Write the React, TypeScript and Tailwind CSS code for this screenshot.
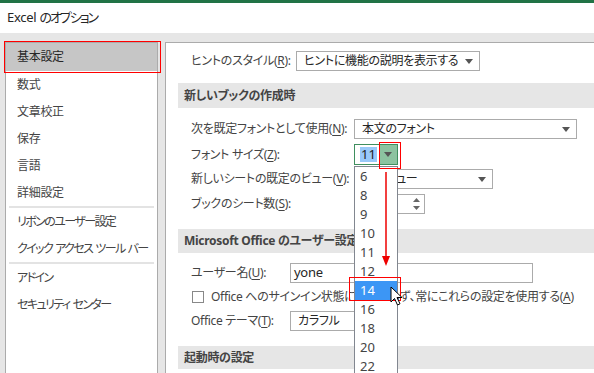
const Tri = () => (
  <svg width="8" height="5" viewBox="0 0 8 5" className="block shrink-0">
    <path d="M0 0h8L4 5z" fill="#555" />
  </svg>
);

const Select = ({ w, text }: { w: string; text: string }) => (
  <div className={`${w} shrink-0 h-[20px] border border-[#ababab] bg-white flex items-center justify-between pl-[7px] pr-[6px] text-[#262626] whitespace-nowrap`}>
    <span>{text}</span>
    <Tri />
  </div>
);

const U = ({ c }: { c: string }) => <span className="underline underline-offset-2">{c}</span>;

// カタカナ中心の項目：字間を詰めて、語の間だけ空ける
const KanaItem = ({ t }: { t: string }) => (
  <div className="h-[27px] flex items-center gap-[3px] pl-[11px] tracking-[-1.6px]">
    {t.split(" ").map((w) => (
      <span key={w}>{w}</span>
    ))}
  </div>
);

const sideTop = ["基本設定", "数式", "文章校正", "保存", "言語", "詳細設定"];
const sideMid = ["リボンのユーザー設定", "クイック アクセス ツール バー"];
const sideBottom = ["アドイン", "セキュリティ センター"];
const sizes = ["6", "8", "9", "10", "11", "12", "14", "16", "18", "20", "22"];

export default function App() {
  return (
    <div className="relative w-[594px] h-[373px] overflow-hidden bg-[#e6e6e6] text-[#444] text-[12px] tracking-[-0.3px] whitespace-nowrap font-['Noto_Sans','Noto_Sans_CJK_JP',sans-serif] [font-feature-settings:'palt']">
      <div className="h-[3px] bg-[#217346]" />
      <div className="h-[30px] bg-white flex items-center pl-[7px] text-[13px] text-[#262626]">
        Excel&nbsp;<span className="tracking-[-2px]">のオプション</span>
      </div>

      <div className="flex pt-[9px] h-[340px]">
        {/* 左：メニュー */}
        <aside className="ml-[5px] w-[153px] shrink-0 bg-white border border-b-0 border-[#ababab]">
          {sideTop.map((s, i) => (
            <div key={s} className={`h-[27px] flex items-center pl-[11px] ${i === 0 ? "bg-[#c6c6c6] h-[28px] text-[#262626]" : ""}`}>{s}</div>
          ))}
          <div className="mx-[3px] h-[2px] bg-[#e3e3e3]" />
          {sideMid.map((s) => (
            <KanaItem key={s} t={s} />
          ))}
          <div className="mx-[3px] h-[2px] bg-[#e3e3e3]" />
          {sideBottom.map((s) => (
            <KanaItem key={s} t={s} />
          ))}
        </aside>

        {/* 右：設定 */}
        <main className="ml-[7px] flex-1 min-w-0 bg-white border-l border-t border-[#ababab] pl-[12px]">
          <div className="mt-[8px] h-[20px] flex items-center pl-[13px]">
            <span className="w-[105px] shrink-0">ヒントのスタイル(<U c="R" />):</span>
            <Select w="w-[184px]" text="ヒントに機能の説明を表示する" />
          </div>

          <div className="mt-[12px] h-[25px] bg-[#e6e6e6] flex items-center pl-[6px] font-bold">新しいブックの作成時</div>

          <div className="mt-[11px] h-[20px] flex items-center pl-[13px]">
            <span className="w-[163px] shrink-0">次を既定フォントとして使用(<U c="N" />):</span>
            <Select w="w-[223px]" text="本文のフォント" />
          </div>

          <div className="mt-[5px] h-[21px] flex items-center pl-[13px]">
            <span className="w-[163px] shrink-0">フォント サイズ(<U c="Z" />):</span>
            <div className="relative z-10 w-[44px] shrink-0 h-[21px] flex border border-[#3f8f5f] bg-white tracking-normal">
              <div className="flex-1 flex items-center pl-[5px]">
                <span className="bg-[#99c9f9] text-[#222] text-[13px] leading-[15px] px-[1px]">11</span>
              </div>
              <div className="w-[18px] bg-[#8cc3a0] flex items-center justify-center">
                <Tri />
              </div>
              {/* ドロップダウン */}
              <div className="absolute left-[-1px] top-[21px] w-[44px] h-[220px] bg-white border border-[#828790] text-[13px] text-[#444]">
                {sizes.map((s) => (
                  <div key={s} className={`h-[19px] flex items-center pl-[5px] ${s === "14" ? "bg-[#3c96f5] text-white" : ""}`}>{s}</div>
                ))}
              </div>
            </div>
          </div>

          <div className="mt-[4px] h-[20px] flex items-center pl-[13px]">
            <span className="w-[163px] shrink-0">新しいシートの既定のビュー(<U c="V" />):</span>
            <Select w="w-[139px]" text="標準ビュー" />
          </div>

          <div className="mt-[5px] h-[20px] flex items-center pl-[13px]">
            <span className="w-[163px] shrink-0">ブックのシート数(<U c="S" />):</span>
            <div className="w-[71px] shrink-0 h-[20px] border border-[#ababab] bg-white flex items-center justify-end pr-[4px]">
              <div className="flex flex-col gap-[4px]">
                <svg width="7" height="4" viewBox="0 0 7 4" className="block"><path d="M0 4h7L3.5 0z" fill="#666" /></svg>
                <svg width="7" height="4" viewBox="0 0 7 4" className="block"><path d="M0 0h7L3.5 4z" fill="#666" /></svg>
              </div>
            </div>
          </div>

          <div className="mt-[15px] h-[24px] bg-[#e6e6e6] flex items-center pl-[6px] font-bold">Microsoft Office のユーザー設定</div>

          <div className="mt-[10px] h-[20px] flex items-center pl-[13px]">
            <span className="w-[99px] shrink-0">ユーザー名(<U c="U" />):</span>
            <div className="w-[243px] shrink-0 h-[20px] border border-[#ababab] bg-white flex items-center pl-[3px] text-[13px] text-[#262626]">yone</div>
          </div>

          <div className="mt-[4px] h-[20px] flex items-center pl-[14px] gap-[7px]">
            <div className="w-[12px] h-[12px] shrink-0 border border-[#888] bg-white" />
            <span>Office へのサインイン状態にかかわらず、常にこれらの設定を使用する(<U c="A" />)</span>
          </div>

          <div className="mt-[4px] h-[20px] flex items-center pl-[13px]">
            <span className="w-[99px] shrink-0">Office テーマ(<U c="T" />):</span>
            <Select w="w-[100px]" text="カラフル" />
          </div>

          <div className="mt-[15px] h-[23px] bg-[#e6e6e6] flex items-center pl-[6px] font-bold">起動時の設定</div>
        </main>
      </div>

      {/* 注釈：赤い枠と矢印、カーソル */}
      <div className="absolute z-20 left-[4px] top-[41px] w-[157px] h-[32px] border-[1.5px] border-[#ff0000]" />
      <div className="absolute z-20 left-[379px] top-[142px] w-[22px] h-[27px] border-[1.5px] border-[#ff0000]" />
      <div className="absolute z-20 left-[349px] top-[277px] w-[52px] h-[24px] border-[1.5px] border-[#ff0000]" />
      <svg className="absolute z-20 left-[381px] top-[172px]" width="10" height="95" viewBox="0 0 10 95">
        <path d="M5 0V86" stroke="#e00" strokeWidth="1.5" />
        <path d="M1 84h8L5 94z" fill="#e00" />
      </svg>
      <svg className="absolute z-20 left-[390px] top-[286px]" width="13" height="21" viewBox="0 0 13 21">
        <path d="M1 1v15l3.5-3.5 3 6.5 2.5-1.2-3-6.3h5z" fill="#fff" stroke="#000" strokeWidth="1" strokeLinejoin="round" />
      </svg>
    </div>
  );
}
